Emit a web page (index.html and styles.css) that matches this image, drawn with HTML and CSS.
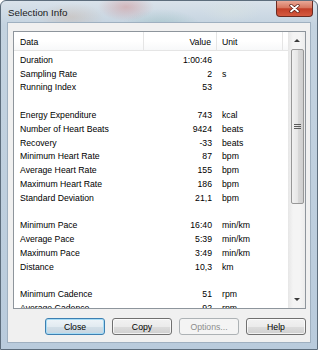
FILE: index.html
```html
<!DOCTYPE html>
<html lang="en">
<head>
  <meta charset="UTF-8">
  <title>Selection Info</title>
  <link rel="stylesheet" href="styles.css">
</head>
<body>
  <div class="window">
    <div class="titlebar">
      <span class="title">Selection Info</span>
      <div class="close">
        <svg width="11" height="9" viewBox="0 0 11 9">
          <path d="M2 1.5 L9 7.5 M9 1.5 L2 7.5" stroke="#5a1c14" stroke-width="3.2" stroke-linecap="round"/>
          <path d="M2 1.5 L9 7.5 M9 1.5 L2 7.5" stroke="#fff" stroke-width="1.8" stroke-linecap="round"/>
        </svg>
      </div>
    </div>
    <div class="client">
      <div class="list">
        <div class="content">
          <div class="header">
            <div class="col data">Data</div>
            <div class="col value">Value</div>
            <div class="col unit">Unit</div>
            <div class="col filler"></div>
          </div>
          <div class="rows">
            <div class="row"><span>Duration</span><span class="v">1:00:46</span><span class="u"></span></div>
            <div class="row"><span>Sampling Rate</span><span class="v">2</span><span class="u">s</span></div>
            <div class="row"><span>Running Index</span><span class="v">53</span><span class="u"></span></div>
            <div class="row"></div>
            <div class="row"><span>Energy Expenditure</span><span class="v">743</span><span class="u">kcal</span></div>
            <div class="row"><span>Number of Heart Beats</span><span class="v">9424</span><span class="u">beats</span></div>
            <div class="row"><span>Recovery</span><span class="v">-33</span><span class="u">beats</span></div>
            <div class="row"><span>Minimum Heart Rate</span><span class="v">87</span><span class="u">bpm</span></div>
            <div class="row"><span>Average Heart Rate</span><span class="v">155</span><span class="u">bpm</span></div>
            <div class="row"><span>Maximum Heart Rate</span><span class="v">186</span><span class="u">bpm</span></div>
            <div class="row"><span>Standard Deviation</span><span class="v">21,1</span><span class="u">bpm</span></div>
            <div class="row"></div>
            <div class="row"><span>Minimum Pace</span><span class="v">16:40</span><span class="u">min/km</span></div>
            <div class="row"><span>Average Pace</span><span class="v">5:39</span><span class="u">min/km</span></div>
            <div class="row"><span>Maximum Pace</span><span class="v">3:49</span><span class="u">min/km</span></div>
            <div class="row"><span>Distance</span><span class="v">10,3</span><span class="u">km</span></div>
            <div class="row"></div>
            <div class="row"><span>Minimum Cadence</span><span class="v">51</span><span class="u">rpm</span></div>
            <div class="row"><span>Average Cadence</span><span class="v">92</span><span class="u">rpm</span></div>
          </div>
        </div>
        <div class="scrollbar">
          <div class="arrow"><span class="tri up"></span></div>
          <div class="track">
            <div class="thumb">
              <svg width="7" height="6" viewBox="0 0 7 6">
                <path d="M0 0.5 H7 M0 2.5 H7 M0 4.5 H7" stroke="#5b5b5b" stroke-width="1"/>
              </svg>
            </div>
          </div>
          <div class="arrow"><span class="tri down"></span></div>
        </div>
      </div>
      <div class="buttons">
        <button class="btn default">Close</button>
        <button class="btn">Copy</button>
        <button class="btn" disabled>Options...</button>
        <button class="btn">Help</button>
      </div>
    </div>
  </div>
</body>
</html>
```

FILE: styles.css
```css
body {
  margin: 0;
  font-family: "Liberation Sans", Arial, sans-serif;
  font-size: 8.7px;
  color: #000;
}
.window {
  width: 318px;
  height: 350px;
  box-sizing: border-box;
  border: 1px solid #5d6d7c;
  border-radius: 6px 6px 0 0;
  padding: 0 7px 7px 7px;
  display: flex;
  flex-direction: column;
  background:
    radial-gradient(ellipse 28px 14px at 125px 6px, rgba(205, 120, 120, 0.4), transparent),
    radial-gradient(ellipse 40px 18px at 160px 26px, rgba(120, 175, 170, 0.35), transparent),
    radial-gradient(ellipse 34px 14px at 70px 16px, rgba(200, 170, 150, 0.35), transparent),
    radial-gradient(ellipse 30px 12px at 230px 10px, rgba(215, 225, 225, 0.6), transparent),
    linear-gradient(#d9e2ea, #c4d3e0 24px, #b9cbdc);
}
.titlebar {
  height: 22px;
  flex: none;
  display: flex;
  justify-content: space-between;
  align-items: flex-start;
}
.title {
  font-size: 9.8px;
  margin-top: 6px;
  color: #1a1a1a;
}
.close {
  width: 37px;
  height: 16px;
  margin-right: -3px;
  box-sizing: border-box;
  border: 1px solid #6b2b22;
  border-top: none;
  border-radius: 0 0 4px 4px;
  background: linear-gradient(#e9a897, #d7765f 45%, #c23f28 52%, #d55a40);
  display: flex;
  justify-content: center;
  align-items: center;
}
.client {
  flex: 1;
  background: #f0f0f0;
  box-shadow: 0 0 0 1px #9fb0c0;
  padding: 8px 4px 0 5px;
  display: flex;
  flex-direction: column;
}
.list {
  height: 278px;
  box-sizing: border-box;
  border: 1px solid #8e959c;
  background: #fff;
  display: flex;
  overflow: hidden;
}
.content {
  flex: 1;
  overflow: hidden;
}
.header {
  display: flex;
  height: 19px;
  box-sizing: border-box;
  border-bottom: 1px solid #e5e5e5;
  background: linear-gradient(#fff, #fff 50%, #f7f8f9);
}
.col {
  display: flex;
  align-items: center;
  padding-top: 2px;
  box-sizing: border-box;
  border-right: 1px solid #e5e5e5;
}
.col.data {
  width: 130px;
  padding-left: 6px;
}
.col.value {
  width: 73px;
  justify-content: flex-end;
  padding-right: 5px;
}
.col.unit {
  width: 66px;
  padding-left: 5px;
}
.col.filler {
  flex: 1;
  border-right: none;
}
.rows {
  padding-top: 2px;
}
.row {
  display: grid;
  grid-template-columns: 130px 73px 66px;
  height: 13.8px;
  align-items: center;
  white-space: nowrap;
}
.row span {
  padding-left: 6px;
}
.row .v {
  text-align: right;
  padding: 0 5px 0 0;
}
.row .u {
  padding-left: 5px;
}
.scrollbar {
  width: 17px;
  flex: none;
  display: flex;
  flex-direction: column;
  background: linear-gradient(to right, #e6e6e6, #f4f4f4 30%, #f4f4f4 70%, #ececec);
}
.arrow {
  height: 17px;
  flex: none;
  display: flex;
  justify-content: center;
  align-items: center;
}
.tri {
  width: 0;
  height: 0;
  border-left: 3px solid transparent;
  border-right: 3px solid transparent;
}
.tri.up {
  border-bottom: 3px solid #3a3a3a;
}
.tri.down {
  border-top: 3px solid #3a3a3a;
}
.track {
  flex: 1;
}
.thumb {
  height: 155px;
  margin: 0 1px 0 3px;
  box-sizing: border-box;
  border: 1px solid #979797;
  border-radius: 2px;
  background: linear-gradient(to right, #f1f1f1, #e6e6e6 50%, #d9d9d9 50%, #cfcfcf);
  display: flex;
  justify-content: center;
  align-items: center;
}
.buttons {
  display: flex;
  justify-content: flex-end;
  gap: 7px;
  margin-top: 9px;
}
.btn {
  width: 60px;
  height: 17px;
  padding: 0;
  font-family: "Liberation Sans", Arial, sans-serif;
  font-size: 8.7px;
  color: #000;
  border: 1px solid #707070;
  border-radius: 3px;
  background: linear-gradient(#f2f2f2, #ebebeb 50%, #dddddd 50%, #cfcfcf);
  box-shadow: inset 0 0 0 1px rgba(255, 255, 255, 0.7);
}
.btn.default {
  border-color: #3c7fb1;
  box-shadow: inset 0 0 0 1px #a6dcf6;
  background: linear-gradient(#eef4f8, #e2ebf1 50%, #d3dfe8 50%, #c6d5e0);
}
.btn:disabled {
  color: #8d8d8d;
  border-color: #adb2b5;
  background: #f4f4f4;
  box-shadow: none;
}
```
